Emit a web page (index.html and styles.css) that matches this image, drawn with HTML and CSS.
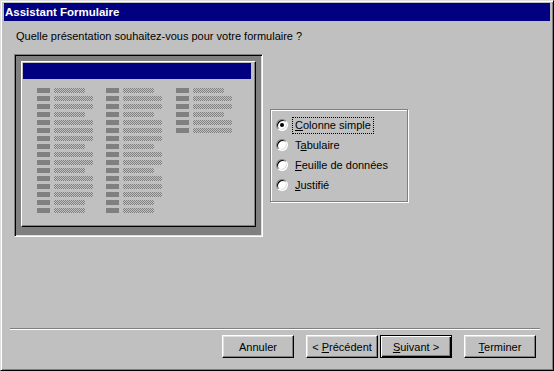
FILE: index.html
```html
<!DOCTYPE html>
<html lang="fr">
  <head>
    <meta charset="UTF-8" />
    <meta name="viewport" content="width=device-width, initial-scale=1.0" />
    <title>Assistant Formulaire</title>
    <link rel="stylesheet" href="styles.css">
  </head>
  <body>
    <div class="window">
      <div class="titlebar">Assistant Formulaire</div>
      <div class="main">
        <p class="question">Quelle présentation souhaitez-vous pour votre formulaire ?</p>
        <div class="layout-row">
          <div class="preview">
            <div class="preview-panel">
              <div class="preview-header"></div>
              <div class="preview-body">
                <div class="preview-col">
                  <div class="row"><span class="lbl"></span><span class="fld"></span></div>
                  <div class="row"><span class="lbl"></span><span class="fld long"></span></div>
                  <div class="row"><span class="lbl"></span><span class="fld long"></span></div>
                  <div class="row"><span class="lbl"></span><span class="fld"></span></div>
                  <div class="row"><span class="lbl"></span><span class="fld long"></span></div>
                  <div class="row"><span class="lbl"></span><span class="fld long"></span></div>
                  <div class="row"><span class="lbl"></span><span class="fld long"></span></div>
                  <div class="row"><span class="lbl"></span><span class="fld"></span></div>
                  <div class="row"><span class="lbl"></span><span class="fld long"></span></div>
                  <div class="row"><span class="lbl"></span><span class="fld long"></span></div>
                  <div class="row"><span class="lbl"></span><span class="fld"></span></div>
                  <div class="row"><span class="lbl"></span><span class="fld long"></span></div>
                  <div class="row"><span class="lbl"></span><span class="fld long"></span></div>
                  <div class="row"><span class="lbl"></span><span class="fld long"></span></div>
                  <div class="row"><span class="lbl"></span><span class="fld"></span></div>
                  <div class="row"><span class="lbl"></span><span class="fld"></span></div>
                </div>
                <div class="preview-col">
                  <div class="row"><span class="lbl"></span><span class="fld"></span></div>
                  <div class="row"><span class="lbl"></span><span class="fld long"></span></div>
                  <div class="row"><span class="lbl"></span><span class="fld long"></span></div>
                  <div class="row"><span class="lbl"></span><span class="fld"></span></div>
                  <div class="row"><span class="lbl"></span><span class="fld long"></span></div>
                  <div class="row"><span class="lbl"></span><span class="fld long"></span></div>
                  <div class="row"><span class="lbl"></span><span class="fld long"></span></div>
                  <div class="row"><span class="lbl"></span><span class="fld"></span></div>
                  <div class="row"><span class="lbl"></span><span class="fld long"></span></div>
                  <div class="row"><span class="lbl"></span><span class="fld long"></span></div>
                  <div class="row"><span class="lbl"></span><span class="fld"></span></div>
                  <div class="row"><span class="lbl"></span><span class="fld long"></span></div>
                  <div class="row"><span class="lbl"></span><span class="fld long"></span></div>
                  <div class="row"><span class="lbl"></span><span class="fld long"></span></div>
                  <div class="row"><span class="lbl"></span><span class="fld"></span></div>
                  <div class="row"><span class="lbl"></span><span class="fld"></span></div>
                </div>
                <div class="preview-col">
                  <div class="row"><span class="lbl"></span><span class="fld"></span></div>
                  <div class="row"><span class="lbl"></span><span class="fld long"></span></div>
                  <div class="row"><span class="lbl"></span><span class="fld long"></span></div>
                  <div class="row"><span class="lbl"></span><span class="fld"></span></div>
                  <div class="row"><span class="lbl"></span><span class="fld long"></span></div>
                  <div class="row"><span class="lbl"></span><span class="fld long"></span></div>
                </div>
              </div>
            </div>
          </div>
          <div class="radio-group">
            <div class="option">
              <span class="radio"><span class="dot"></span></span>
              <span class="option-text focused"><u>C</u>olonne simple</span>
            </div>
            <div class="option">
              <span class="radio"></span>
              <span class="option-text">T<u>a</u>bulaire</span>
            </div>
            <div class="option">
              <span class="radio"></span>
              <span class="option-text"><u>F</u>euille de données</span>
            </div>
            <div class="option">
              <span class="radio"></span>
              <span class="option-text"><u>J</u>ustifié</span>
            </div>
          </div>
        </div>
      </div>
      <div class="footer">
        <div class="separator"></div>
        <div class="buttons">
          <button type="button" class="btn">Annuler</button>
          <button type="button" class="btn btn-prev">&lt; <u>P</u>récédent</button>
          <button type="button" class="btn btn-default"><u>S</u>uivant &gt;</button>
          <button type="button" class="btn btn-last"><u>T</u>erminer</button>
        </div>
      </div>
    </div>
  </body>
</html>
```

FILE: styles.css
```css
body {
  margin: 0;
  background-color: #c0c0c0;
  font-family: "Liberation Sans", Arial, sans-serif;
  font-size: 11px;
  color: black;
}

.window {
  width: 554px;
  height: 371px;
  box-sizing: border-box;
  display: flex;
  flex-direction: column;
  padding: 2px 3px 3px 3px;
  border: 1px solid;
  border-color: #dfdfdf #000 #000 #dfdfdf;
  box-shadow: inset 1px 1px #fff, inset -1px -1px #808080;
  background-color: #c0c0c0;
}

.titlebar {
  height: 18px;
  line-height: 18px;
  padding-left: 1px;
  background-color: #000080;
  color: white;
  font-weight: bold;
  font-size: 11.5px;
}

.main {
  padding-left: 10px;
}

.question {
  margin: 9px 0 0 2px;
  line-height: 13px;
}

.layout-row {
  display: flex;
  align-items: flex-start;
  margin-top: 11px;
}

/* sunken frame around the form thumbnail */
.preview {
  width: 249px;
  height: 183px;
  box-sizing: border-box;
  padding: 6px 6px 9px 6px;
  border: 1px solid;
  border-color: #808080 #fff #fff #808080;
  box-shadow: inset 1px 1px #000, inset -1px -1px #dfdfdf;
  background-color: #808080;
}

.preview-panel {
  width: 235px;
  height: 166px;
  box-sizing: border-box;
  border: 1px solid;
  border-color: #fff #000 #000 #fff;
  box-shadow: inset -1px -1px #808080;
  background-color: #c0c0c0;
  padding: 1px;
}

.preview-header {
  width: 228px;
  height: 16px;
  background-color: #000080;
}

.preview-body {
  display: grid;
  grid-template-columns: 69px 70px auto;
  padding: 9px 0 0 14px;
}

.row {
  display: flex;
  gap: 4px;
  height: 8px;
}

.lbl {
  width: 13px;
  height: 5px;
  background-color: #808080;
}

.fld {
  width: 31px;
  height: 5px;
  background-image: repeating-conic-gradient(#808080 0 25%, #c0c0c0 0 50%);
  background-size: 2px 2px;
}

.fld.long {
  width: 39px;
}

/* etched group box */
.radio-group {
  width: 138px;
  height: 93px;
  box-sizing: border-box;
  margin: 55px 0 0 7px;
  padding: 5px 0 0 5px;
  border: 1px solid #808080;
  box-shadow: inset 1px 1px #fff, 1px 1px #fff;
}

.option {
  display: flex;
  align-items: center;
  height: 20px;
}

.radio {
  width: 12px;
  height: 12px;
  box-sizing: border-box;
  display: flex;
  align-items: center;
  justify-content: center;
  border-radius: 50%;
  border: 1px solid;
  border-color: #808080 #fff #fff #808080;
  box-shadow: inset 1px 1px #000, inset -1px -1px #dfdfdf;
  background-color: #fff;
}

.dot {
  width: 4px;
  height: 4px;
  border-radius: 50%;
  background-color: #000;
}

.option-text {
  margin-left: 4px;
  padding: 1px 2px;
  line-height: 13px;
  border: 1px solid transparent;
}

.option-text.focused {
  border: 1px dotted #000;
}

.footer {
  margin-top: auto;
  padding-bottom: 9px;
}

.separator {
  margin: 0 10px 5px 6px;
  border-top: 1px solid #808080;
  border-bottom: 1px solid #fff;
}

.buttons {
  display: flex;
  justify-content: flex-end;
  padding-right: 14px;
}

.btn {
  width: 72px;
  height: 23px;
  padding: 0;
  margin-left: 12px;
  font-family: "Liberation Sans", Arial, sans-serif;
  font-size: 11px;
  color: black;
  background-color: #c0c0c0;
  border: 1px solid;
  border-color: #fff #000 #000 #fff;
  box-shadow: inset -1px -1px #808080, inset 1px 1px #dfdfdf;
}

.btn-default {
  margin-left: 2px;
  border-color: #000;
  box-shadow: inset 1px 1px #fff, inset -1px -1px #000, inset -2px -2px #808080;
}
```
